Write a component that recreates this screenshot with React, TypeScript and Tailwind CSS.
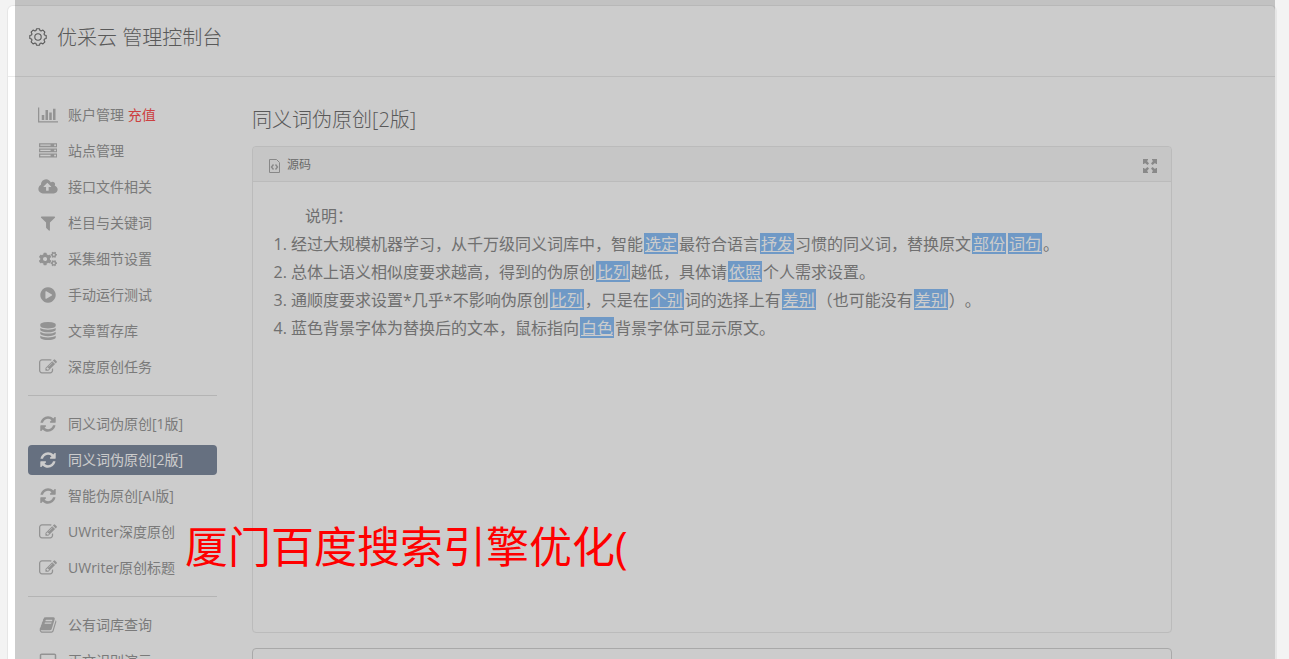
import type { ReactNode } from 'react';
import { FaCogs } from 'react-icons/fa';

const icons: Record<string, { box: string; d: string }> = {
  chart: {
    box: '0 0 2048 1792',
    d: 'M640 896v512h-256v-512h256zm384-512v1024h-256v-1024h256zm1024 1152v128h-2048v-1536h128v1408h1920zm-640-896v768h-256v-768h256zm384-384v1152h-256v-1152h256z',
  },
  server: {
    box: '0 0 1792 1792',
    d: 'M128 1408h1024v-128h-1024v128zm0-512h1024v-128h-1024v128zm1568 448q0-40-28-68t-68-28-68 28-28 68 28 68 68 28 68-28 28-68zm-1568-960h1024v-128h-1024v128zm1568 448q0-40-28-68t-68-28-68 28-28 68 28 68 68 28 68-28 28-68zm0-512q0-40-28-68t-68-28-68 28-28 68 28 68 68 28 68-28 28-68zm96 832v384h-1792v-384h1792zm0-512v384h-1792v-384h1792zm0-512v384h-1792v-384h1792z',
  },
  cloud: {
    box: '-64 0 1920 1792',
    d: 'M1216 864q0-14-9-23l-352-352q-9-9-23-9t-23 9l-351 351q-10 12-10 24 0 14 9 23t23 9h224v352q0 13 9.5 22.5t22.5 9.5h192q13 0 22.5-9.5t9.5-22.5v-352h224q13 0 22.5-9.5t9.5-22.5zm640 288q0 159-112.5 271.5t-271.5 112.5h-1088q-185 0-316.5-131.5t-131.5-316.5q0-130 70-240t188-165q-2-30-2-43 0-212 150-362t362-150q156 0 285.5 87t188.5 231q71-62 166-62 106 0 181 75t75 181q0 76-41 138 130 31 213.5 135.5t83.5 238.5z',
  },
  filter: {
    box: '0 0 1792 1792',
    d: 'M1595 295q17 41-14 70l-493 493v742q0 42-39 59-13 5-25 5-27 0-45-19l-256-256q-19-19-19-45v-486l-493-493q-31-29-14-70 17-39 59-39h1280q42 0 59 39z',
  },
  play: {
    box: '0 0 1792 1792',
    d: 'M896 128q209 0 385.5 103t279.5 279.5 103 385.5-103 385.5-279.5 279.5-385.5 103-385.5-103-279.5-279.5-103-385.5 103-385.5 279.5-279.5 385.5-103zm384 823q32-18 32-55t-32-55l-544-320q-31-19-64-1-32 19-32 56v640q0 37 32 56 16 8 32 8 17 0 32-9z',
  },
  database: {
    box: '0 0 1792 1792',
    d: 'M896 768q237 0 443-43t325-127v170q0 69-103 128t-280 93.5-385 34.5-385-34.5-280-93.5-103-128v-170q119 84 325 127t443 43zm0 768q237 0 443-43t325-127v170q0 69-103 128t-280 93.5-385 34.5-385-34.5-280-93.5-103-128v-170q119 84 325 127t443 43zm0-384q237 0 443-43t325-127v170q0 69-103 128t-280 93.5-385 34.5-385-34.5-280-93.5-103-128v-170q119 84 325 127t443 43zm0-1152q208 0 385 34.5t280 93.5 103 128v128q0 69-103 128t-280 93.5-385 34.5-385-34.5-280-93.5-103-128v-128q0-69 103-128t280-93.5 385-34.5z',
  },
  edit: {
    box: '0 0 1792 1792',
    d: 'M888 1184l116-116-152-152-116 116v56h96v96h56zm440-720q-16-16-33 1l-350 350q-17 17-1 33t33-1l350-350q17-17 1-33zm80 594v190q0 119-84.5 203.5t-203.5 84.5h-832q-119 0-203.5-84.5t-84.5-203.5v-832q0-119 84.5-203.5t203.5-84.5h832q63 0 117 25 15 7 18 23 3 17-9 29l-49 49q-14 14-32 8-23-6-45-6h-832q-66 0-113 47t-47 113v832q0 66 47 113t113 47h832q66 0 113-47t47-113v-126q0-13 9-22l64-64q15-15 35-7t20 29zm-96-738l288 288-672 672h-288v-288zm444 132l-92 92-288-288 92-92q28-28 68-28t68 28l152 152q28 28 28 68t-28 68z',
  },
  refresh: {
    box: '0 0 1792 1792',
    d: 'M1639 1056q0 5-1 7-64 268-268 434.5t-478 166.5q-146 0-282.5-55t-243.5-157l-129 129q-19 19-45 19t-45-19-19-45v-448q0-26 19-45t45-19h448q26 0 45 19t19 45-19 45l-137 137q71 66 161 102t187 36q134 0 250-65t186-179q11-17 53-117 8-23 30-23h192q13 0 22.5 9.5t9.5 22.5zm25-800v448q0 26-19 45t-45 19h-448q-26 0-45-19t-19-45 19-45l138-138q-148-137-349-137-134 0-250 65t-186 179q-11 17-53 117-8 23-30 23h-199q-13 0-22.5-9.5t-9.5-22.5v-7q65-268 270-434.5t480-166.5q146 0 284 55.5t245 156.5l130-129q19-19 45-19t45 19 19 45z',
  },
  book: {
    box: '0 0 1792 1792',
    d: 'M1703 478q40 57 18 129l-275 906q-19 64-76.5 107.5t-122.5 43.5h-923q-77 0-148.5-53.5t-99.5-131.5q-24-67-2-127 0-4 3-27t4-37q1-8-3-21.5t-3-19.5q2-11 8-21t16.5-23.5 16.5-23.5q23-38 45-91.5t30-91.5q3-10 .5-30t-.5-28q3-11 17-28t17-23q21-36 42-92t25-90q1-9-2.5-32t.5-28q4-13 22-30.5t22-22.5q19-26 42.5-84.5t27.5-96.5q1-8-3-25.5t-2-26.5q2-8 9-18t18-23 17-21q8-12 16.5-30.5t15-35 16-36 19.5-32 26.5-23.5 36-11.5 47.5 5.5l-1 3q38-9 51-9h761q74 0 114 56t18 130l-274 906q-36 119-71.5 153.5t-128.5 34.5h-869q-27 0-38 15-11 16-1 43 24 70 144 70h923q29 0 56-15.5t35-41.5l300-987q7-22 5-57 38 15 59 43zm-1064 2q-4 13 2 22.5t20 9.5h608q13 0 25.5-9.5t16.5-22.5l21-64q4-13-2-22.5t-20-9.5h-608q-13 0-25.5 9.5t-16.5 22.5zm-83 256q-4 13 2 22.5t20 9.5h608q13 0 25.5-9.5t16.5-22.5l21-64q4-13-2-22.5t-20-9.5h-608q-13 0-25.5 9.5t-16.5 22.5z',
  },
  laptop: {
    box: '128 128 1664 1536',
    d: 'M416 1280q-66 0-113-47t-47-113v-704q0-66 47-113t113-47h1088q66 0 113 47t47 113v704q0 66-47 113t-113 47h-1088zm-32-864v704q0 13 9.5 22.5t22.5 9.5h1088q13 0 22.5-9.5t9.5-22.5v-704q0-13-9.5-22.5t-22.5-9.5h-1088q-13 0-22.5 9.5t-9.5 22.5z',
  },
};

function MenuIcon({ name }: { name: string }) {
  if (name === 'cogs') return <FaCogs className="h-[18px] w-[18px]" aria-hidden="true" />;
  const icon = icons[name];
  return (
    <svg viewBox={icon.box} className="h-[18px] w-5" fill="currentColor" aria-hidden="true">
      <path d={icon.d} />
    </svg>
  );
}

type Item = { icon: string; label: string; extra?: string; active?: boolean };

const menu: Item[][] = [
  [
    { icon: 'chart', label: '账户管理', extra: '充值' },
    { icon: 'server', label: '站点管理' },
    { icon: 'cloud', label: '接口文件相关' },
    { icon: 'filter', label: '栏目与关键词' },
    { icon: 'cogs', label: '采集细节设置' },
    { icon: 'play', label: '手动运行测试' },
    { icon: 'database', label: '文章暂存库' },
    { icon: 'edit', label: '深度原创任务' },
  ],
  [
    { icon: 'refresh', label: '同义词伪原创[1版]' },
    { icon: 'refresh', label: '同义词伪原创[2版]', active: true },
    { icon: 'refresh', label: '智能伪原创[AI版]' },
    { icon: 'edit', label: 'UWriter深度原创' },
    { icon: 'edit', label: 'UWriter原创标题' },
  ],
  [
    { icon: 'book', label: '公有词库查询' },
    { icon: 'laptop', label: '正文识别演示' },
  ],
];

function Sidebar() {
  return (
    <nav className="w-[189px] shrink-0">
      {menu.map((group, i) => (
        <ul
          key={i}
          className="mb-[13px] flex flex-col gap-1.5 border-b border-[#e2e2e2] pb-[13px] last:border-0"
        >
          {group.map((item) => (
            <li key={item.label}>
              <a
                href="#"
                className={
                  item.active
                    ? 'flex h-[30px] items-center gap-2.5 rounded bg-[#808ca0] px-2.5 text-white'
                    : 'flex h-[30px] items-center gap-2.5 rounded px-2.5 text-[#999]'
                }
              >
                <span className={item.active ? 'flex w-5 justify-center' : 'flex w-5 justify-center text-[#b8b8b8]'}>
                  <MenuIcon name={item.icon} />
                </span>
                <span className="whitespace-nowrap">
                  {item.label}
                  {item.extra && <span className="text-[#ff5050]"> {item.extra}</span>}
                </span>
              </a>
            </li>
          ))}
        </ul>
      ))}
    </nav>
  );
}

// A word that the rewriter has swapped in
function Swap({ children }: { children: ReactNode }) {
  return (
    <span className="mx-px inline-block bg-[#8bc0f8] px-px pt-px leading-5 text-white underline">
      {children}
    </span>
  );
}

function Editor() {
  return (
    <section className="h-[487px] rounded border border-[#eaeaea]">
      <div className="flex h-[35px] items-center justify-between rounded-t border-b border-[#eaeaea] bg-[#f8f8f8] px-3.5">
        <button type="button" className="flex items-center gap-1.5 pt-0.5 text-xs text-[#858585]">
          <svg viewBox="0 0 14 16" className="h-4 w-3.5" fill="none" stroke="#aaa" aria-hidden="true">
            <path d="M2.5 2.5h7l3 3v10h-10z" />
            <path d="M6.500 7.500L4.500 10l2 2.500M8.500 7.500l2 2.500-2 2.500" strokeWidth="1.400" />
          </svg>
          源码
        </button>
        <button type="button" aria-label="最大化" className="mt-1 text-[#acacac]">
          <svg viewBox="0 0 14 14" className="h-3.5 w-3.5" fill="currentColor" aria-hidden="true">
            <path d="M0 0h5v1L4 2l2 2.500L4.500 6L2 4L1 5H0z" />
            <path d="M14 0v5h-1l-1-1-2.500 2L8 4.500L10 2L9 1V0z" />
            <path d="M0 14V9h1l1 1 2.500-2L6 9.500L4 12l1 1v1z" />
            <path d="M14 14H9v-1l1-1-2-2.500L9.500 8l2.500 2 1-1h1z" />
          </svg>
        </button>
      </div>
      <div className="pt-5 pr-5 pl-[38px] text-base leading-7 text-[#8c8c8c] [text-spacing-trim:space-all]">
        <p className="pl-3.5">说明：</p>
        <ol className="list-decimal">
          <li>
            经过大规模机器学习，从千万级同义词库中，智能<Swap>选定</Swap>最符合语言<Swap>抒发</Swap>
            习惯的同义词，替换原文<Swap>部份</Swap><Swap>词句</Swap>。
          </li>
          <li>
            总体上语义相似度要求越高，得到的伪原创<Swap>比列</Swap>越低，具体请<Swap>依照</Swap>个人需求设置。
          </li>
          <li>
            通顺度要求设置*几乎*不影响伪原创<Swap>比列</Swap>，只是在<Swap>个别</Swap>词的选择上有
            <Swap>差别</Swap>（也可能没有<Swap>差别</Swap>）。
          </li>
          <li>
            蓝色背景字体为替换后的文本，鼠标指向<Swap>白色</Swap>背景字体可显示原文。
          </li>
        </ol>
      </div>
    </section>
  );
}

export default function App() {
  return (
    <div className="relative h-screen overflow-hidden bg-[#f3f3f3] pt-[5px] pr-3 pl-[7px] font-['Open_Sans','Noto_Sans_CJK_SC',sans-serif] text-sm">
      <div className="h-full rounded-t-md border-t border-r-2 border-l border-[#e6e6e6] bg-white">
        <header className="flex h-[71px] items-center gap-2.5 border-b border-[#eaeaea] px-[21px] pb-2 text-xl font-light text-[#707070]">
          <svg viewBox="0 0 18 18" className="h-[18px] w-[18px]" fill="none" stroke="currentColor" aria-hidden="true">
            <path
              strokeWidth="1.1"
              strokeLinejoin="round"
              d="M7.5 .8h3l.5 1.700 1.100.5 1.800-.9 2 2-.9 1.800.5 1.100 1.700.5v3l-1.700.5-.5 1.100.9 1.800-2 2-1.800-.9-1.100.5-.5 1.700h-3l-.5-1.700-1.100-.5-1.800.9-2-2 .9-1.800-.5-1.100L.8 10.500v-3l1.700-.5.5-1.100-.9-1.800 2-2 1.800.9L7 2.500z"
            />
            <circle cx="9" cy="9" r="3.2" strokeWidth="1.1" />
          </svg>
          <h1 className="pt-0.5">优采云 管理控制台</h1>
        </header>
        <div className="flex gap-[35px] pt-[23px] pr-[103px] pl-5">
          <Sidebar />
          <main className="min-w-0 flex-1">
            <h2 className="mb-[11px] pt-[5px] text-xl leading-[30px] font-light text-[#707070]">
              同义词伪原创[2版]
            </h2>
            <Editor />
            <textarea
              aria-label="原文"
              className="mt-[15px] block h-40 w-full resize-none rounded-sm border border-[#d4d4d4]"
            />
          </main>
        </div>
      </div>

      {/* Dimmed layer with the caption on top */}
      <div className="absolute inset-y-0 right-3.5 left-[15px] bg-black/20">
        <p className="absolute top-[515px] left-[170px] text-[43px] leading-[64px] whitespace-nowrap text-[#ff0000]">
          厦门百度搜索引擎优化(
        </p>
      </div>
    </div>
  );
}
